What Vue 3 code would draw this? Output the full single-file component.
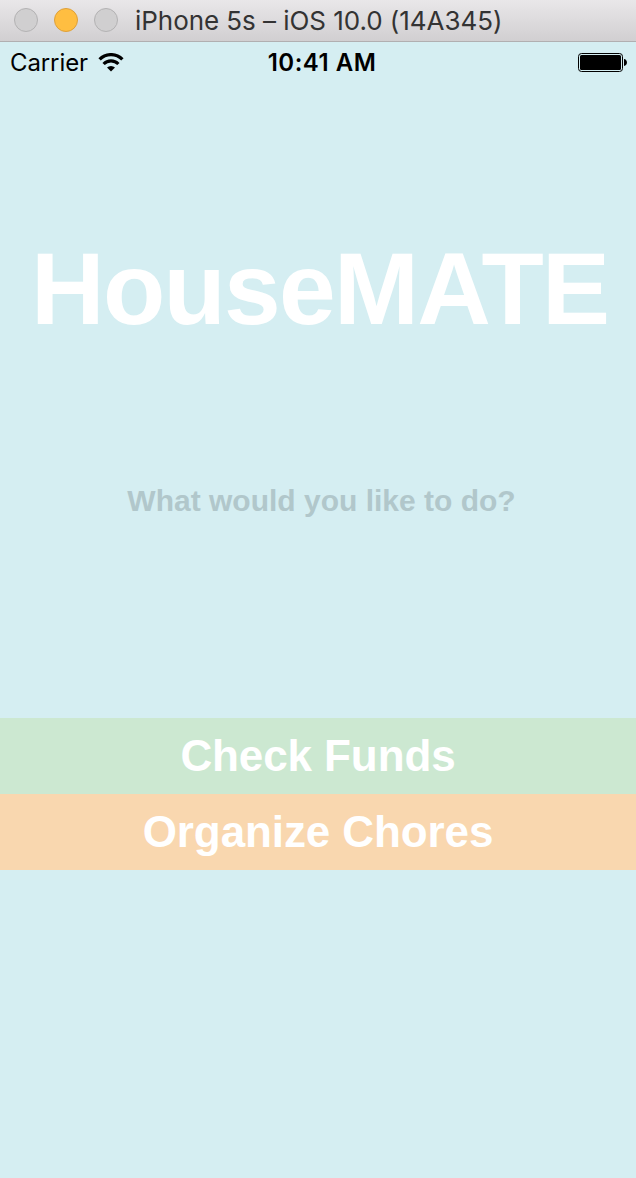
<template>
  <div class="simulator">
    <header class="title-bar">
      <div class="lights">
        <span v-for="light in lights" :key="light" class="light" :class="light"></span>
      </div>
      <span class="window-title">iPhone 5s – iOS 10.0 (14A345)</span>
    </header>

    <main class="screen">
      <div class="status-bar">
        <div class="status-left">
          <span class="carrier">Carrier</span>
          <svg class="wifi" width="26" height="20" viewBox="0 0 26 20">
            <path d="M1.6 6.4A16 16 0 0 1 24.4 6.4" fill="none" stroke="#000" stroke-width="3.3" />
            <path d="M5.6 11A10.4 10.4 0 0 1 20.4 11" fill="none" stroke="#000" stroke-width="3.2" />
            <path d="M9 14.5A5.8 5.8 0 0 1 17 14.5L13 18.6Z" fill="#000" />
          </svg>
        </div>
        <span class="time">10:41 AM</span>
        <svg class="battery" width="50" height="20" viewBox="0 0 50 20">
          <rect x="0.5" y="0.5" width="44" height="18" rx="3" fill="none" stroke="#000" />
          <rect x="2" y="2" width="41" height="15" rx="1.5" fill="#000" />
          <path d="M46 6C49.9 6.3 49.9 12.7 46 13Z" fill="#000" />
        </svg>
      </div>

      <h1 class="logo">HouseMATE</h1>
      <p class="question">What would you like to do?</p>

      <div class="actions">
        <button
          v-for="action in actions"
          :key="action.name"
          class="action"
          :class="action.name"
        >
          {{ action.label }}
        </button>
      </div>
    </main>
  </div>
</template>

<script setup>
const lights = ['close', 'minimize', 'zoom']

const actions = [
  { name: 'funds', label: 'Check Funds' },
  { name: 'chores', label: 'Organize Chores' }
]
</script>

<style>
body {
  margin: 0;
  background: #d5eef2;
}
</style>

<style scoped>
.simulator {
  width: 636px;
  height: 1178px;
  overflow: hidden;
  display: flex;
  flex-direction: column;
  font-family: 'Liberation Sans', Arial, sans-serif;
}

.title-bar {
  box-sizing: border-box;
  height: 42px;
  flex: none;
  display: flex;
  align-items: center;
  padding: 0 0 1px 14px;
  background: linear-gradient(#e9e7e9, #d1cfd1);
  border-bottom: 1px solid #b1afb1;
}

.lights {
  display: flex;
  gap: 16px;
}

.light {
  box-sizing: border-box;
  width: 24px;
  height: 24px;
  border-radius: 50%;
  background: #d0cfd0;
  border: 1px solid #b3b2b3;
}

.light.minimize {
  background: #ffbe41;
  border-color: #dea03a;
}

.window-title {
  margin-left: 17px;
  padding-top: 2px;
  font-family: Inter, sans-serif;
  font-size: 26px;
  letter-spacing: -0.05px;
  line-height: 38px;
  color: #333;
  white-space: nowrap;
}

.screen {
  flex: 1;
  display: flex;
  flex-direction: column;
  background: #d5eef2;
}

.status-bar {
  height: 40px;
  display: grid;
  grid-template-columns: 1fr auto 1fr;
  align-items: center;
  padding: 1px 8px 0 10px;
  font-family: Inter, sans-serif;
  font-size: 24px;
  line-height: 40px;
  color: #000;
}

.status-left {
  display: flex;
  align-items: center;
  gap: 10px;
}

.carrier {
  letter-spacing: -0.1px;
}

.time {
  margin-left: 6px;
  font-weight: 600;
  letter-spacing: 0.5px;
}

.battery {
  justify-self: end;
}

.logo {
  margin: 149px 0 0 31px;
  font-size: 102px;
  line-height: 114px;
  font-weight: bold;
  letter-spacing: -1.75px;
  color: #fff;
  white-space: nowrap;
}

.question {
  margin: 135px 0 0 7px;
  font-size: 30px;
  line-height: 40px;
  font-weight: bold;
  text-align: center;
  color: #b1c7cb;
}

.actions {
  margin-top: 197px;
  display: flex;
  flex-direction: column;
}

.action {
  height: 76px;
  padding: 0;
  border: none;
  font-family: inherit;
  font-size: 44px;
  line-height: 76px;
  font-weight: bold;
  letter-spacing: -0.1px;
  text-align: center;
  color: #fff;
  cursor: pointer;
}

.funds {
  background: #cce8d1;
}

.chores {
  background: #f9d7af;
}
</style>
